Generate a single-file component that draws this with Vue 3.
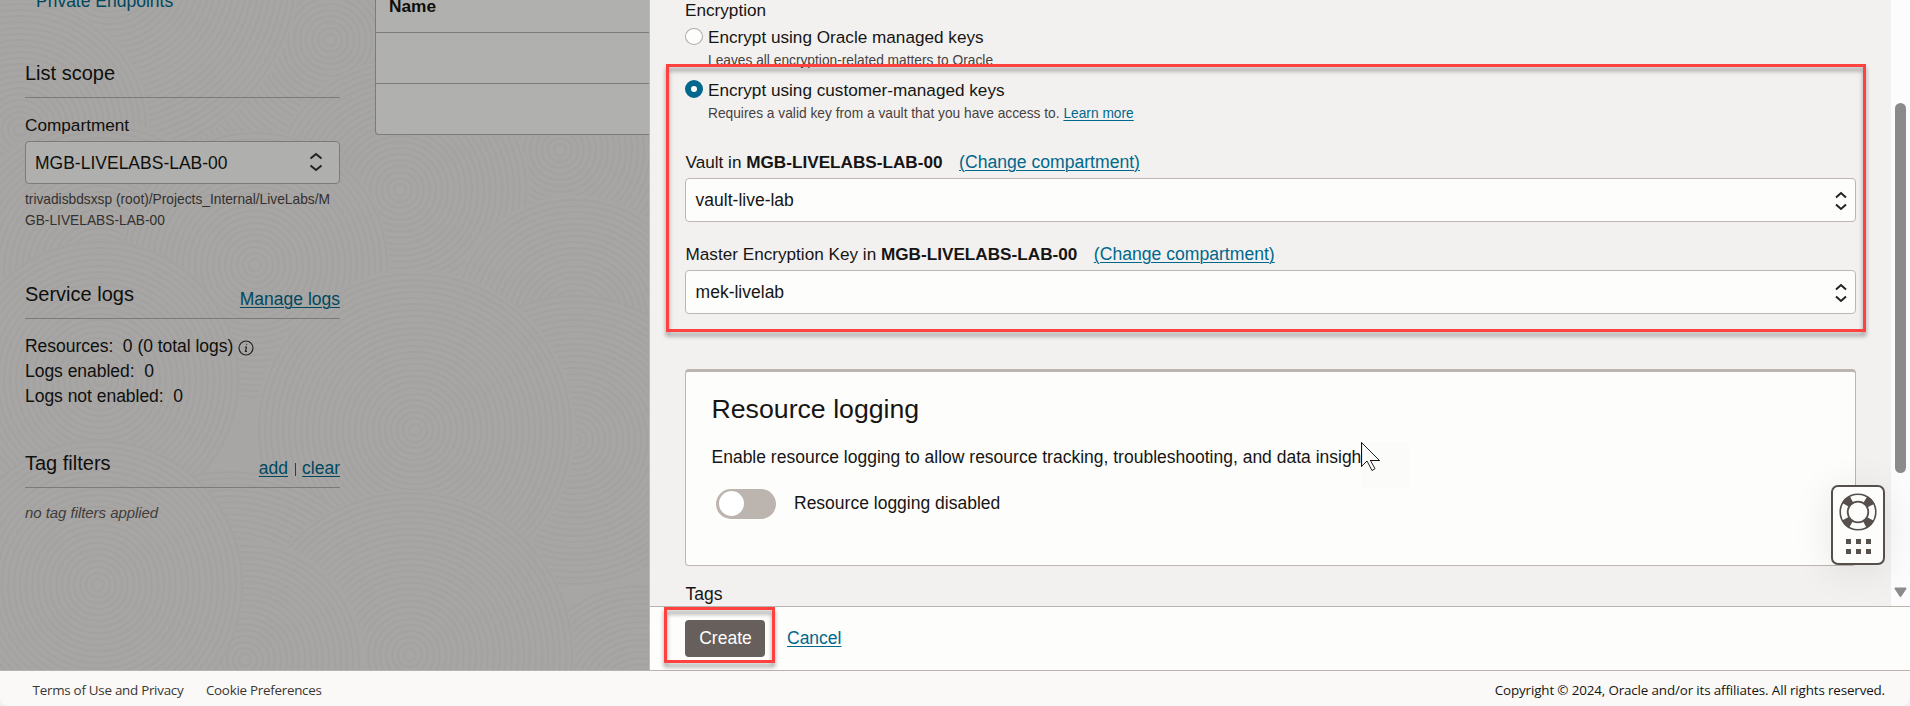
<script setup>
// Overlapping discs of concentric rings that texture the dimmed page.
const discs = [
  { x: 330, y: 40, r: 170 }, { x: 110, y: -30, r: 190 }, { x: 640, y: 330, r: 170 },
  { x: 560, y: 150, r: 130 }, { x: 20, y: 130, r: 130 }, { x: 400, y: 190, r: 130 },
  { x: 575, y: 320, r: 125 }, { x: 100, y: 270, r: 150 }, { x: 255, y: 265, r: 135 },
  { x: 100, y: 380, r: 140 }, { x: 575, y: 440, r: 145 }, { x: 415, y: 430, r: 160 },
  { x: 230, y: 640, r: 170 }, { x: 640, y: 700, r: 120 }, { x: 410, y: 655, r: 165 },
  { x: 245, y: 660, r: 120 }, { x: 98, y: 585, r: 145 },
]
const ringsOf = (d) => {
  const out = []
  for (let r = 6; r < d.r; r += 6) out.push(r)
  return out
}
</script>

<template>
  <div class="page">
    <div class="main">
      <div class="backdrop">
        <svg class="texture" width="649" height="670" viewBox="0 0 649 670">
          <g v-for="(d, i) in discs" :key="i">
            <circle :cx="d.x" :cy="d.y" :r="d.r" fill="#a7a6a4" />
            <circle v-for="r in ringsOf(d)" :key="r" :cx="d.x" :cy="d.y" :r="r" fill="none" stroke="#a4a2a1" stroke-width="2" />
          </g>
        </svg>
        <aside class="side">
          <a class="nav-link">Private Endpoints</a>
          <div class="head first"><span>List scope</span></div>
          <div class="comp-label">Compartment</div>
          <div class="select side-select">
            <span>MGB-LIVELABS-LAB-00</span>
            <svg class="chev" width="14" height="20" viewBox="0 0 14 20"><path d="M1.5 6.5 7 2l5.500 4.500M1.500 13.500 7 18l5.500-4.500" /></svg>
          </div>
          <div class="path">trivadisbdsxsp (root)/Projects_Internal/LiveLabs/M<br>GB-LIVELABS-LAB-00</div>
          <div class="head logs-head"><span>Service logs</span><a class="u">Manage logs</a></div>
          <div class="logs">
            <div class="log-line">Resources:&nbsp; 0 (0 total logs)
              <svg class="info" width="16" height="16" viewBox="0 0 16 16"><circle cx="8" cy="8" r="7" /><path d="M8.700 3.900l-.1.900M6.800 7h1.600l-.9 4.300h1.500" /></svg>
            </div>
            <div>Logs enabled:&nbsp; 0</div>
            <div>Logs not enabled:&nbsp; 0</div>
          </div>
          <div class="head tag-head"><span>Tag filters</span><div class="tag-links"><a class="u">add</a><i></i><a class="u">clear</a></div></div>
          <div class="none">no tag filters applied</div>
        </aside>
        <div class="table">
          <div class="th">Name</div>
          <div class="tr"></div>
          <div class="tr"></div>
        </div>
      </div>

      <section class="panel">
        <div class="scroll-row">
          <div class="form">
            <div class="lbl enc">Encryption</div>
            <div class="opt o1"><span class="radio"></span><span class="lbl">Encrypt using Oracle managed keys</span></div>
            <div class="sub">Leaves all encryption-related matters to Oracle</div>
            <div class="opt o2"><span class="radio on"></span><span class="lbl">Encrypt using customer-managed keys</span></div>
            <div class="sub">Requires a valid key from a vault that you have access to. <a class="u">Learn more</a></div>
            <div class="lbl field vault"><span>Vault in <b>MGB-LIVELABS-LAB-00</b></span><a class="u change">(Change compartment)</a></div>
            <div class="select big">
              <span>vault-live-lab</span>
              <svg class="chev" width="12" height="20" viewBox="0 0 12 20"><path d="M1 6.500 6 2l5 4.500M1 13.500 6 18l5-4.500" /></svg>
            </div>
            <div class="lbl field mek"><span>Master Encryption Key in <b>MGB-LIVELABS-LAB-00</b></span><a class="u change">(Change compartment)</a></div>
            <div class="select big">
              <span>mek-livelab</span>
              <svg class="chev" width="12" height="20" viewBox="0 0 12 20"><path d="M1 6.500 6 2l5 4.500M1 13.500 6 18l5-4.500" /></svg>
            </div>
            <div class="card">
              <h2>Resource logging</h2>
              <p>Enable resource logging to allow resource tracking, troubleshooting, and data insigh</p>
              <div class="toggle-row"><span class="toggle"></span><span class="toggle-text">Resource logging disabled</span></div>
            </div>
            <div class="tags">Tags</div>
          </div>
          <div class="scrollbar">
            <div class="thumb"></div>
            <svg class="arrow" width="13" height="11" viewBox="0 0 13 11"><path d="M1.500 1.500h10L6.500 9z" fill="#8b8b8b" stroke="#8b8b8b" stroke-width="2" stroke-linejoin="round" /></svg>
          </div>
        </div>
        <div class="actions"><button class="create">Create</button><a class="u cancel">Cancel</a></div>
      </section>
    </div>

    <footer class="foot">
      <div class="foot-links"><span>Terms of Use and Privacy</span><span>Cookie Preferences</span></div>
      <span class="copy">Copyright © 2024, Oracle and/or its affiliates. All rights reserved.</span>
    </footer>

    <div class="mark mark-form"></div>
    <div class="mark mark-create"></div>

    <div class="pointer">
      <svg width="20" height="30" viewBox="0 0 20 30"><path d="M.5.500v24l5.500-5.500 5 9.500 3-1.700-4.500-8.300H18.500z" fill="#fdfdfc" stroke="#222" stroke-width="1" /><path d="M.5.500v24M9 18.500h9.500" stroke="#111" stroke-width="1.200" fill="none" /></svg>
    </div>

    <div class="help">
      <svg width="38" height="38" viewBox="0 0 38 38">
        <circle cx="19" cy="19" r="14.300" fill="none" stroke="#55504c" stroke-width="8.500" stroke-dasharray="8 14.460" stroke-dashoffset="-7.230" />
        <circle cx="19" cy="19" r="17.800" fill="none" stroke="#55504c" stroke-width="1.600" />
        <circle cx="19" cy="19" r="10.300" fill="none" stroke="#55504c" stroke-width="1.800" />
      </svg>
      <div class="dots"><b v-for="n in 6" :key="n"></b></div>
    </div>
  </div>
</template>

<style>
html, body { margin: 0; overflow: hidden; background: #f1f1f1; }
</style>

<style scoped>
* { box-sizing: border-box; }
.page {
  position: relative; width: 1910px; height: 706px; overflow: hidden;
  display: flex; flex-direction: column;
  font-family: "Liberation Sans", Arial, sans-serif; font-size: 17.5px; line-height: 24px; color: #161513;
  white-space: nowrap;
}
.main { display: flex; height: 670px; }
.backdrop { position: relative; width: 649px; height: 670px; overflow: hidden; background: #a7a6a4; display: flex; gap: 35px; color: #0f0f0d; }
.texture { position: absolute; left: 0; top: 0; }
.side { position: relative; width: 315px; margin-left: 25px; flex: none; }
.nav-link { display: block; margin: -11px 0 0 11px; color: #00485f; }
.u { color: #00688c; text-decoration: underline; text-decoration-thickness: 1px; text-underline-offset: 2px; }
.side .u { color: #00485f; }
.head { display: flex; justify-content: space-between; align-items: flex-start; height: 37px; border-bottom: 1px solid #7d7b79; }
.head > span { font-size: 20px; }
.head > a, .tag-links { margin-top: 5px; }
.first { margin-top: 48px; }
.comp-label { margin-top: 15px; font-size: 17.2px; }
.select { display: flex; justify-content: space-between; align-items: flex-start; border: 1px solid #bcb6b1; border-radius: 4px; background: #fdfdfc; padding-top: 9px; padding-left: 9px; }
.side-select { margin-top: 4px; height: 43px; background: #afafad; border-color: #7d7b79; padding-right: 16px; }
.chev { fill: none; stroke: #222; stroke-width: 2; margin-top: 1px; }
.big { height: 44px; margin-top: 4px; padding-left: 9.6px; padding-right: 8px; }
.big .chev { margin-top: 3px; }
.path { margin-top: 5px; font-size: 13.75px; line-height: 21px; color: #33302e; }
.logs-head { margin-top: 51px; }
.logs { margin-top: 15px; line-height: 25px; letter-spacing: -.03px; }
.log-line { display: flex; align-items: flex-start; gap: 5px; }
.info { margin-top: 6px; fill: none; stroke: #222; stroke-width: 1.2; }
.tag-head { margin-top: 42px; }
.tag-links { display: flex; }
.tag-links i { width: 1px; height: 13px; margin: 7px 6px 0 7px; background: #47362a; }
.none { margin-top: 14px; font-size: 15px; letter-spacing: -.05px; line-height: 21px; font-style: italic; color: #3f3c3a; }
.table { position: relative; flex: 1; height: 135px; border: solid #7d7b79; border-width: 0 0 1px 1px; border-bottom-left-radius: 4px; background: #b0b0ae; }
.th { height: 33px; padding: 0 0 0 13px; border-bottom: 1px solid #7d7b79; font-weight: bold; line-height: 12px; font-size: 17.3px; }
.tr { height: 51px; }
.tr:nth-child(2) { border-bottom: 1px solid #7d7b79; }

.panel { flex: 1; border-left: 1px solid #bcb8b5; display: flex; flex-direction: column; }
.scroll-row { display: flex; height: 606px; overflow: hidden; }
.form { width: 1241px; padding: 0 35px; background: #f3f1f0; }
.lbl { font-size: 17.17px; line-height: 23px; }
.enc { margin-top: -1px; }
.opt { display: flex; gap: 5px; }
.o1 { margin-top: 4px; }
.o2 { margin-top: 8px; }
.radio { width: 18px; height: 17px; margin-top: 2px; border: 1px solid #b0aaa5; border-radius: 50%; background: #fdfdfc; }
.radio.on { height: 18px; margin-top: 1px; border: 6px solid #00688c; }
.sub { margin: 1px 0 0 23px; font-size: 13.75px; line-height: 21px; color: #47423f; }
.field { display: flex; gap: 16.5px; padding-left: .5px; }
.change { font-size: 17.6px; }
.vault { margin-top: 27px; }
.mek { margin-top: 21px; }
.card { height: 197px; margin-top: 55px; padding: 21px 0 0 25.5px; background: #fdfdfc; border: 1px solid #bcb6b1; border-top: 3px solid #bcb4ae; border-radius: 4px; }
h2 { margin: 0; font-weight: normal; font-size: 26.7px; line-height: 32px; }
p { margin: 20px 0 0; }
.toggle-row { display: flex; gap: 18px; margin: 20px 0 0 4.5px; }
.toggle { width: 60px; height: 30px; border-radius: 15px; background: #bcb4ae; padding: 2px 3px; }
.toggle::before { content: ""; display: block; width: 25px; height: 25px; border-radius: 50%; background: #fff; }
.toggle-text { margin-top: 2px; }
.tags { margin-top: 16px; padding-left: .6px; }
.scrollbar { width: 19px; height: 606px; background: #fcfcfc; display: flex; flex-direction: column; justify-content: space-between; padding: 103px 3px 8px 3px; }
.thumb { width: 11px; height: 370px; margin-left: 1px; border-radius: 6px; background: #8b8b8b; }
.actions { height: 64px; padding: 13px 0 0 35px; display: flex; align-items: flex-start; border-top: 1px solid #b9b4ae; background: #fdfdfc; }
.create { width: 80px; height: 37px; padding: 0 0 1px 1px; border: 0; border-radius: 4px; background: #665f5b; color: #fff; font: 17.5px/24px "Liberation Sans", Arial, sans-serif; }
.cancel { margin: 6px 0 0 22px; }

.foot { height: 36px; border-top: 1px solid #b9b4ae; border-radius: 0 0 9px 9px; background: #faf9f7; display: flex; justify-content: space-between; padding: 10px 25px 0 32.6px; font-family: "Open Sans", "Noto Sans", sans-serif; font-size: 13.4px; line-height: 18px; color: #3a3632; }
.foot-links { display: flex; gap: 22.5px; letter-spacing: -.27px; }
.copy { color: #161513; letter-spacing: -.14px; }

.mark { position: absolute; border: 3px solid #ff4240; filter: drop-shadow(0 4px 2px rgba(0, 0, 0, .38)); }
.mark-form { left: 666px; top: 64px; width: 1200px; height: 268px; }
.mark-create { left: 664px; top: 607px; width: 111px; height: 56px; }
.pointer { position: absolute; left: 1361px; top: 442px; width: 48px; height: 47px; background: #fbfbfa; }
.pointer svg { display: block; }
.help { position: absolute; left: 1831px; top: 485px; width: 54px; height: 80px; border: 2px solid #55504c; border-radius: 7px; background: #fdfdfc; box-shadow: 0 5px 40px rgba(0, 0, 0, .09); padding: 6px 0 0 6px; }
.help svg { display: block; }
.dots { display: grid; grid-template-columns: repeat(3, 5px); gap: 5px; margin: 8px 0 0 7px; }
.dots b { width: 5px; height: 5px; background: #55504c; }
</style>
